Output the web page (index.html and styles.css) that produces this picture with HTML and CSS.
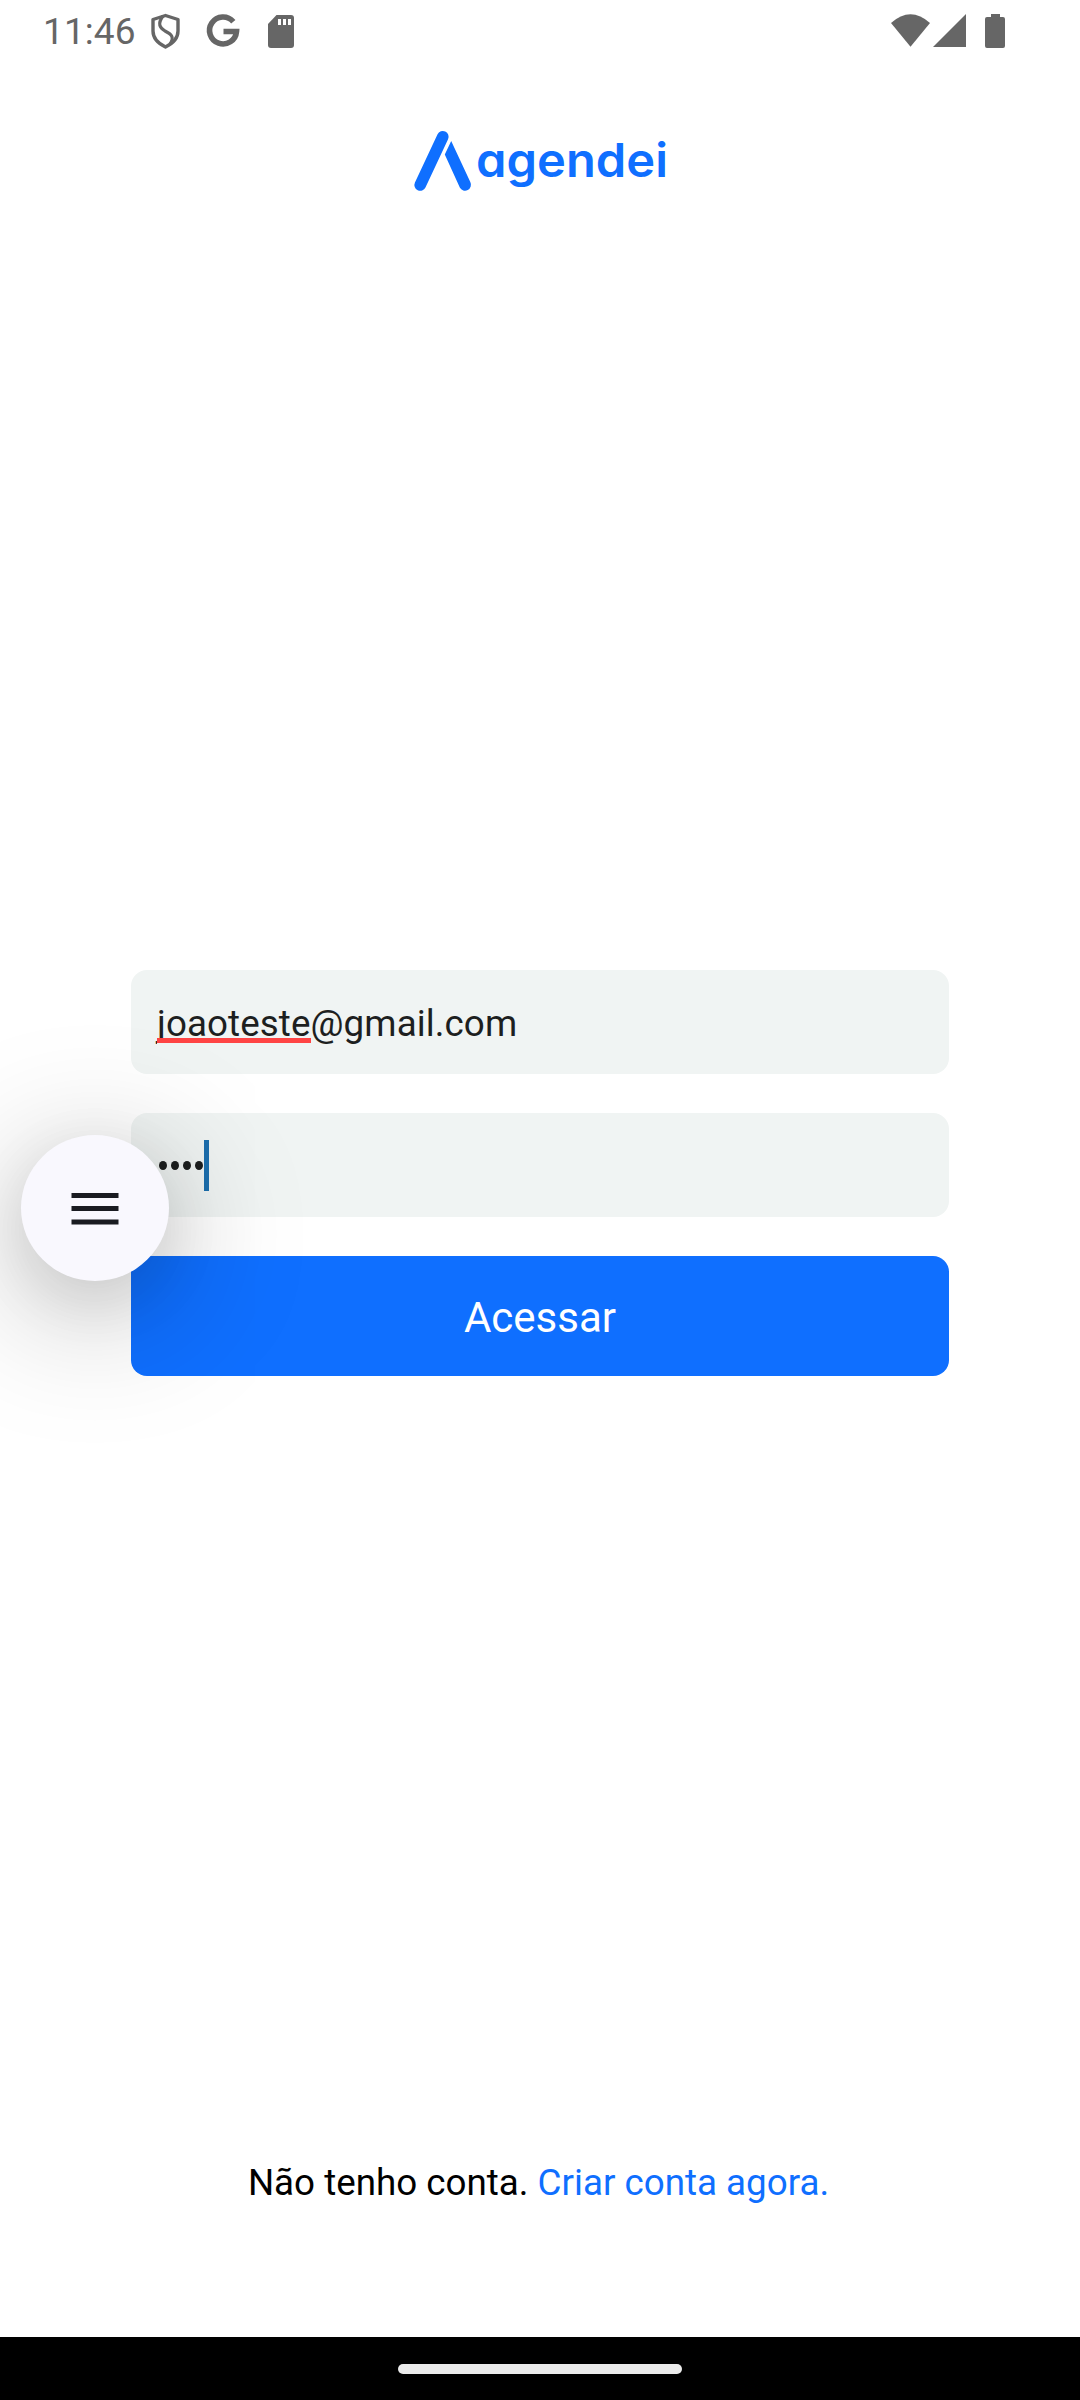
FILE: index.html
```html
<!DOCTYPE html>
<html lang="pt-BR">
<head>
<meta charset="utf-8">
<title>agendei</title>
<link rel="stylesheet" href="styles.css">
</head>
<body>
<div class="screen">
  <header class="status">
    <span class="clock">11:46</span>
    <svg class="status-left" width="150" height="64" viewBox="0 0 150 64">
      <path d="M16.500 15.500L29 19.500V31Q29 41 16.500 47Q4 41 4 31V19.500Z" fill="none" stroke="#666" stroke-width="3.400" stroke-linejoin="round"/>
      <path d="M14 16C8 24 11 28 16 31C22 34 26 37 21 44" fill="none" stroke="#666" stroke-width="3.200"/>
      <path d="M84.300 21.700A13.500 13.500 0 1 0 87.500 31.500H74.500" fill="none" stroke="#666" stroke-width="5.600"/>
      <path d="M127.500 15H142Q145 15 145 18V45Q145 48 142 48H122Q119 48 119 45V24Z" fill="#666"/>
      <path d="M129 19h3v6h-3zM134 19h3v6h-3zM139 19h3v6h-3z" fill="#fff"/>
    </svg>
    <svg class="status-right" width="120" height="64" viewBox="0 0 120 64">
      <path d="M1 23Q20.500 5.500 40 23L20.500 46.700Z" fill="#666"/>
      <path d="M43 47L76 14V47Z" fill="#666"/>
      <path d="M101 14h9v3h3q2 0 2 2v27q0 2-2 2H97q-2 0-2-2V19q0-2 2-2h4z" fill="#666"/>
    </svg>
  </header>

  <main class="login">
    <svg class="logo" width="280" height="80" viewBox="0 0 280 80">
      <path d="M42.800 16.800L20.200 65" stroke="#0f6fff" stroke-width="11.600" stroke-linecap="round"/>
      <path d="M51.200 21L70.300 62A5.800 5.800 0 0 1 59.800 67.500L44.800 34.500Z" fill="#0f6fff"/>
      <text class="logo-name" x="76" y="56.500" textLength="192" lengthAdjust="spacingAndGlyphs">agendei</text>
    </svg>

    <form class="form">
      <div class="field"><span class="value"><span class="misspelled">joaoteste</span>@gmail.com</span></div>
      <div class="field"><span class="dots"><i></i><i></i><i></i><i></i></span><span class="caret"></span></div>
      <div class="submit"><span>Acessar</span></div>
    </form>

    <p class="signup"><span>Não tenho conta. </span><a class="link">Criar conta agora.</a></p>
  </main>

  <footer class="navbar"><span class="handle"></span></footer>

  <div class="fab">
    <svg width="48" height="34" viewBox="0 0 48 34"><path d="M.5 1h47v5h-47zM.5 14h47v5h-47zM.5 27.500h47v5h-47z" fill="#1a1b21"/></svg>
  </div>
</div>
</body>
</html>
```
FILE: styles.css
```css
* { box-sizing: border-box; }
body { margin: 0; background: #fff; font-family: Roboto, sans-serif; }
.screen { position: relative; width: 1080px; height: 2400px; display: flex; flex-direction: column; overflow: hidden; }
.status { display: flex; height: 64px; padding: 0 70px 0 43px; }
.clock { width: 106px; font-size: 37px; line-height: 63px; color: #666; letter-spacing: .1px; white-space: nowrap; }
.status-right { margin-left: auto; }
.login { flex: 1; display: flex; flex-direction: column; align-items: center; padding: 56px 131px 132px; }
.logo { display: block; }
.logo-name { font-family: Inter, sans-serif; font-weight: 600; font-size: 47px; font-feature-settings: "cv11" 1; fill: #0f6fff; }
.form { width: 818px; margin-top: 770px; display: flex; flex-direction: column; gap: 39px; }
.field { height: 104px; border-radius: 16px; background: #f0f4f3; padding: 0 26px; display: flex; align-items: center; }
.value { font-size: 36.75px; line-height: 44px; padding-top: 4px; color: #1d1f1f; letter-spacing: .09px; white-space: nowrap; }
.misspelled { position: relative; }
/* The spelling mark covers the descender of the j. */
.misspelled::after { content: ""; position: absolute; left: 0; right: 0; bottom: 0; height: 7px; background: linear-gradient(#ff4444 5px, #f0f4f3 5px); }
.dots { display: flex; gap: 4px; padding-left: 2px; }
.dots i { width: 8px; height: 9px; border-radius: 50%; background: #1d1f1f; }
.caret { width: 5px; height: 51px; margin-left: 1px; background: #1c6fae; }
.submit { height: 120px; border-radius: 16px; background: #0f6fff; color: #fff; font-size: 42px; line-height: 124px; text-align: center; }
.signup { margin: auto 3px 0 0; font-size: 36.75px; line-height: 44px; color: #000; white-space: pre; }
.link { color: #0f6fff; }
.navbar { height: 63px; background: #000; display: flex; justify-content: center; padding-top: 27px; }
.handle { width: 284px; height: 10px; border-radius: 5px; background: #ebebeb; }
.fab { position: absolute; left: 21px; top: 1135px; width: 148px; height: 146px; border-radius: 50%; background: #f9f8fe; display: flex; align-items: center; justify-content: center; padding-top: 1px; box-shadow: 0 26px 140px 4px rgba(0,0,0,.28), 0 18px 60px rgba(0,0,0,.09); }
```
